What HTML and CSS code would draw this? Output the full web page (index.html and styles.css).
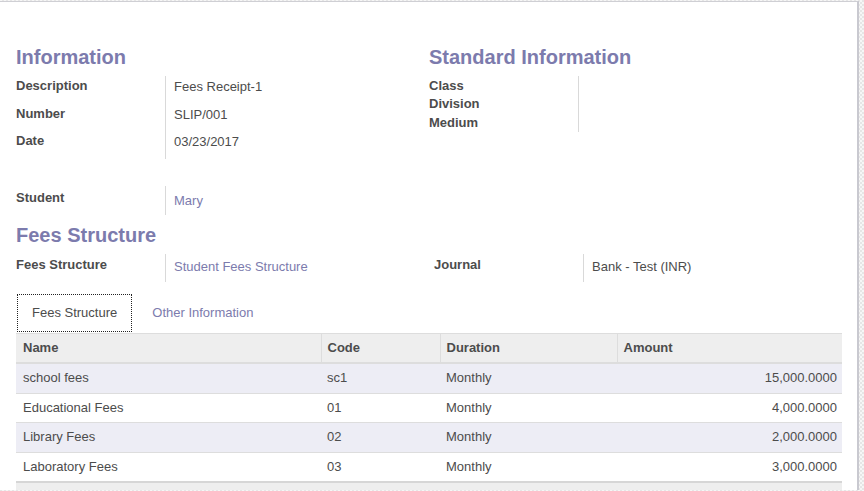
FILE: index.html
```html
<!DOCTYPE html>
<html>
<head>
<meta charset="utf-8">
<link rel="stylesheet" href="styles.css">
</head>
<body>
<div class="sheet">
  <div class="top-groups">
    <div class="group">
      <h2 class="sep">Information</h2>
      <div class="fields">
        <div class="lbl r1">Description</div><div class="val r1">Fees Receipt-1</div>
        <div class="lbl r2">Number</div><div class="val r2">SLIP/001</div>
        <div class="lbl r3">Date</div><div class="val r3">03/23/2017</div>
      </div>
    </div>
    <div class="group">
      <h2 class="sep">Standard Information</h2>
      <div class="fields">
        <div class="lbl-stack">
          <div>Class</div>
          <div>Division</div>
          <div>Medium</div>
        </div>
        <div class="val"></div>
      </div>
    </div>
  </div>

  <div class="fields student">
    <div class="lbl">Student</div><div class="val link">Mary</div>
  </div>

  <h2 class="sep fees-head">Fees Structure</h2>
  <div class="fees-row">
    <div class="fields fs">
      <div class="lbl">Fees Structure</div><div class="val link">Student Fees Structure</div>
    </div>
    <div class="fields fs journal">
      <div class="lbl">Journal</div><div class="val">Bank - Test (INR)</div>
    </div>
  </div>

  <div class="tabs">
    <div class="tab active">Fees Structure</div>
    <div class="tab">Other Information</div>
  </div>

  <table class="list">
    <colgroup>
      <col class="c-name"><col class="c-code"><col class="c-dur"><col>
    </colgroup>
    <thead>
      <tr><th>Name</th><th>Code</th><th>Duration</th><th>Amount</th></tr>
    </thead>
    <tbody>
      <tr><td>school fees</td><td>sc1</td><td>Monthly</td><td class="num">15,000.0000</td></tr>
      <tr><td>Educational Fees</td><td>01</td><td>Monthly</td><td class="num">4,000.0000</td></tr>
      <tr><td>Library Fees</td><td>02</td><td>Monthly</td><td class="num">2,000.0000</td></tr>
      <tr><td>Laboratory Fees</td><td>03</td><td>Monthly</td><td class="num">3,000.0000</td></tr>
    </tbody>
    <tfoot>
      <tr><td></td><td></td><td></td><td></td></tr>
    </tfoot>
  </table>
</div>
</body>
</html>
```

FILE: styles.css
```css
html, body {
  margin: 0;
  padding: 0;
  height: 100%;
  overflow: hidden;
}
body {
  background: repeating-conic-gradient(#e6e6e6 0 25%, #f6f6f6 0 50%) 0 0 / 4px 4px;
  font-family: "Liberation Sans", Arial, sans-serif;
  font-size: 13px;
  color: #4c4c4c;
}
.sheet {
  margin-top: 1px;
  width: 841px;
  height: calc(100vh - 2px);
  overflow: hidden;
  background: #fff;
  border-top: 1px solid #cfcfd4;
  border-right: 2px solid #c9c9d0;
  padding: 44px 0 0 16px;
  box-sizing: border-box;
  width: 859px;
}
.top-groups {
  display: grid;
  grid-template-columns: 413px 1fr;
}
h2.sep {
  margin: 0 0 8px;
  font-size: 20px;
  line-height: 22px;
  font-weight: bold;
  color: #7c7bad;
}
h2.fees-head { margin-top: 9px; }
.fields {
  display: grid;
  grid-template-columns: 150px 1fr;
}
.lbl {
  font-weight: bold;
  line-height: 18px;
  border-right: 1px solid #d9d9d9;
  padding-top: 1px;
  box-sizing: border-box;
}
.val {
  line-height: 18px;
  padding-left: 8px;
  padding-top: 2px;
  box-sizing: border-box;
}
.r1 { height: 28px; }
.r2 { height: 27px; }
.r3 { height: 28px; }
.lbl-stack {
  font-weight: bold;
  line-height: 18.3px;
  padding-top: 1px;
  height: 56px;
  border-right: 1px solid #d9d9d9;
  box-sizing: border-box;
}
.link { color: #7c7bad; }

.student {
  margin-top: 27px;
  height: 29px;
}
.student .lbl { padding-top: 3px; }
.student .val { padding-top: 6px; }

.fees-row {
  display: grid;
  grid-template-columns: 418px 1fr;
}
.fs { height: 28px; }
.fs .lbl { padding-top: 2px; }
.fs .val { padding-top: 4px; }

.tabs {
  display: flex;
  margin-top: 12px;
  height: 38px;
  padding-left: 1px;
}
.tab {
  padding: 10px 15px;
  line-height: 18px;
  color: #7c7bad;
  box-sizing: border-box;
  height: 38px;
  margin-right: 5px;
  white-space: nowrap;
}
.tab.active {
  color: #4c4c4c;
  border: 1px dotted #222;
  padding: 9px 14px;
}

table.list {
  margin-top: 1px;
  width: 826px;
  border-collapse: collapse;
  table-layout: fixed;
}
.c-name { width: 305px; }
.c-code { width: 119px; }
.c-dur { width: 177px; }
.list th {
  background: #eeeeee;
  text-align: left;
  font-weight: bold;
  height: 28px;
  padding: 0 6px;
  border-top: 1px solid #dddddd;
  border-bottom: 2px solid #dddddd;
  border-left: 1px solid #dddddd;
  line-height: 18px;
}
.list th:first-child { border-left: none; padding-left: 7px; }
.list td {
  height: 28.6px;
  padding: 0 6px;
  line-height: 18px;
  border-top: 1px solid #dddddd;
}
.list td:first-child { padding-left: 7px; }
.list tbody tr:nth-child(odd) td { background: #ededf5; }
.list td.num { text-align: right; padding-right: 5px; }
.list tfoot td {
  background: #eeeeee;
  border-top: 2px solid #d6d6d6;
  height: 30px;
}
```
